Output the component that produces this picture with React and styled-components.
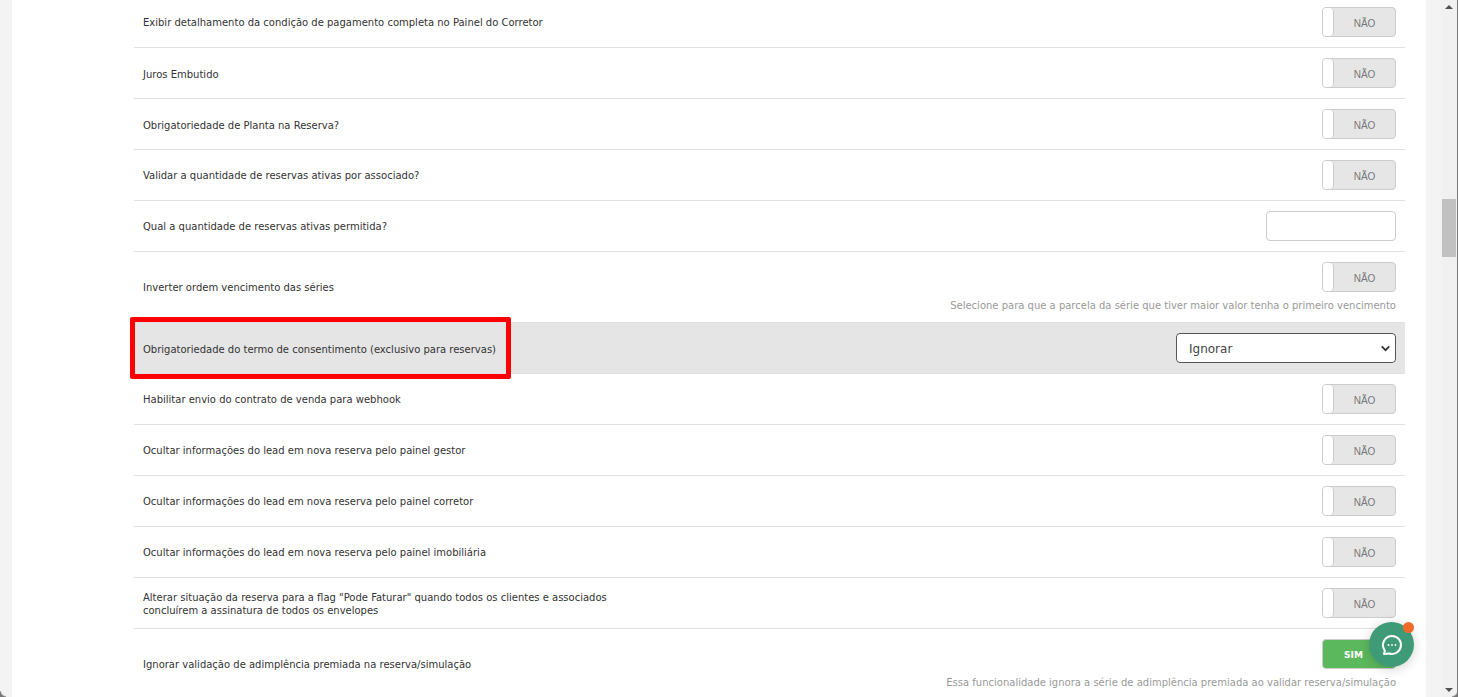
import React from 'react';
import styled, { createGlobalStyle } from 'styled-components';

const GlobalStyle = createGlobalStyle`
  html, body {
    margin: 0;
    height: 100%;
    overflow: hidden;
    background: #f3f3f3;
  }
  * {
    box-sizing: border-box;
  }
`;

const Window = styled.div`
  width: 1458px;
  height: 697px;
  display: flex;
  overflow: hidden;
  position: relative;
  font-family: 'DejaVu Sans', Verdana, sans-serif;
`;

const Page = styled.div`
  flex: 1;
  padding: 0 15px 0 12px;
  background: #f3f3f3;
  overflow: hidden;
`;

const Panel = styled.div`
  height: 100%;
  background: #fff;
  padding: 0 21px 0 122px;
  overflow: hidden;
`;

const List = styled.div`
  margin-top: -3px;
`;

const Row = styled.div`
  display: flex;
  align-items: center;
  justify-content: space-between;
  height: ${p => p.$height || 51}px;
  padding: 0 9px;
  border-bottom: 1px solid #e1e1e1;
  background: ${p => (p.$active ? '#e5e5e5' : 'transparent')};
`;

const Label = styled.div`
  position: relative;
  width: 480px;
  padding-top: ${p => (p.$nudge ? 2 : 0)}px;
  font-size: 10px;
  line-height: 13px;
  color: #333;
`;

const Highlight = styled.div`
  position: absolute;
  left: -13px;
  top: -24px;
  width: 381px;
  height: 62px;
  border: 5px solid #ff0000;
  border-radius: 2px;
`;

const Control = styled.div`
  display: flex;
  flex-direction: column;
  align-items: flex-end;
  gap: 7px;
`;

const Hint = styled.div`
  font-size: 10px;
  line-height: 13px;
  color: #999;
`;

const Toggle = styled.div`
  display: flex;
  width: 74px;
  height: 30px;
  border: 1px solid #ccc;
  border-radius: 4px;
  overflow: hidden;
  background: ${p => (p.$on ? '#5cb85c' : '#e6e6e6')};
`;

const Knob = styled.div`
  width: 11px;
  background: #fff;
  border-right: 1px solid #ccc;
  border-radius: 0 4px 4px 0;
`;

const ToggleText = styled.span`
  flex: 1;
  padding-top: 2px;
  text-align: center;
  font-family: 'Liberation Sans', Arial, sans-serif;
  font-size: 10px;
  line-height: 28px;
  color: #777;
`;

const OnText = styled.span`
  flex: 1;
  padding: 1px 11px 0 0;
  text-align: center;
  font-size: 9px;
  font-weight: 700;
  line-height: 28px;
  color: #fff;
`;

const TextInput = styled.div`
  width: 130px;
  height: 30px;
  background: #fff;
  border: 1px solid #ccc;
  border-radius: 4px;
`;

const SelectBox = styled.div`
  display: flex;
  align-items: center;
  justify-content: space-between;
  width: 220px;
  height: 30px;
  padding: 1px 4px 0 12px;
  background: #fff;
  border: 1px solid #555;
  border-radius: 4px;
  font-size: 12px;
  color: #444;
`;

const Scrollbar = styled.div`
  width: 17px;
  display: flex;
  flex-direction: column;
  align-items: center;
  justify-content: space-between;
  background: #f1f1f1;
  border-right: 1px solid #777;
`;

const ArrowUp = styled.div`
  margin-top: 5px;
  border-left: 4px solid transparent;
  border-right: 4px solid transparent;
  border-bottom: 4px solid #505050;
`;

const ArrowDown = styled.div`
  margin-bottom: 5px;
  border-left: 4px solid transparent;
  border-right: 4px solid transparent;
  border-top: 4px solid #505050;
`;

const Thumb = styled.div`
  position: absolute;
  top: 199px;
  right: 2px;
  width: 14px;
  height: 58px;
  background: #c1c1c1;
`;

const Corner = styled.div`
  position: absolute;
  bottom: 0;
  ${p => (p.$right ? 'right: 0' : 'left: 0')};
  width: 6px;
  height: 6px;
  background: radial-gradient(
    circle at ${p => (p.$right ? '0 0' : '100% 0')},
    transparent 4.5px,
    #777 6px
  );
`;

const ChatButton = styled.div`
  position: absolute;
  left: 1369px;
  top: 622px;
  width: 45px;
  height: 45px;
  display: flex;
  align-items: center;
  justify-content: center;
  border-radius: 50%;
  background: #3f9a78;
  box-shadow: 0 2px 12px rgba(0, 0, 0, 0.18);
`;

const ChatDot = styled.div`
  position: absolute;
  top: 0;
  right: 0;
  width: 11px;
  height: 11px;
  border-radius: 50%;
  background: #f26a2a;
`;

const rows = [
  { label: 'Exibir detalhamento da condição de pagamento completa no Painel do Corretor' },
  { label: 'Juros Embutido', nudge: true },
  { label: 'Obrigatoriedade de Planta na Reserva?', nudge: true },
  { label: 'Validar a quantidade de reservas ativas por associado?' },
  { label: 'Qual a quantidade de reservas ativas permitida?', kind: 'input' },
  {
    label: 'Inverter ordem vencimento das séries',
    hint: 'Selecione para que a parcela da série que tiver maior valor tenha o primeiro vencimento',
    height: 71,
  },
  {
    label: 'Obrigatoriedade do termo de consentimento (exclusivo para reservas)',
    kind: 'select',
    nudge: true,
  },
  { label: 'Habilitar envio do contrato de venda para webhook' },
  { label: 'Ocultar informações do lead em nova reserva pelo painel gestor' },
  { label: 'Ocultar informações do lead em nova reserva pelo painel corretor' },
  { label: 'Ocultar informações do lead em nova reserva pelo painel imobiliária' },
  {
    label: 'Alterar situação da reserva para a flag "Pode Faturar" quando todos os clientes e associados concluírem a assinatura de todos os envelopes',
    nudge: true,
  },
  {
    label: 'Ignorar validação de adimplência premiada na reserva/simulação',
    hint: 'Essa funcionalidade ignora a série de adimplência premiada ao validar reserva/simulação',
    height: 71,
    on: true,
  },
];

const Chevron = () => (
  <svg width="11" height="11" viewBox="0 0 16 16">
    <path d="M2.5 5 L8 10.5 L13.5 5" fill="none" stroke="#333" strokeWidth="2.6" />
  </svg>
);

const ChatIcon = () => (
  <svg width="24" height="24" viewBox="0 0 24 24" fill="none">
    <path
      d="M12 3a9 9 0 1 1-3 17.5L4 21l.9-3.5A9 9 0 0 1 12 3z"
      stroke="#fff"
      strokeWidth="2"
      strokeLinejoin="round"
    />
    <circle cx="8.5" cy="12" r="0.9" fill="#fff" />
    <circle cx="12" cy="12" r="0.9" fill="#fff" />
    <circle cx="15.5" cy="12" r="0.9" fill="#fff" />
  </svg>
);

const renderControl = row => {
  if (row.kind === 'input') return <TextInput />;
  if (row.kind === 'select') {
    return (
      <SelectBox>
        Ignorar
        <Chevron />
      </SelectBox>
    );
  }
  return (
    <Control>
      {row.on ? (
        <Toggle $on>
          <OnText>SIM</OnText>
        </Toggle>
      ) : (
        <Toggle>
          <Knob />
          <ToggleText>NÃO</ToggleText>
        </Toggle>
      )}
      {row.hint && <Hint>{row.hint}</Hint>}
    </Control>
  );
};

const App = () => (
  <Window>
    <GlobalStyle />
    <Page>
      <Panel>
        <List>
          {rows.map(row => (
            <Row key={row.label} $height={row.height} $active={row.kind === 'select'}>
              <Label $nudge={row.nudge}>
                {row.label}
                {row.kind === 'select' && <Highlight />}
              </Label>
              {renderControl(row)}
            </Row>
          ))}
        </List>
      </Panel>
    </Page>
    <Scrollbar>
      <ArrowUp />
      <ArrowDown />
    </Scrollbar>
    <Thumb />
    <Corner />
    <Corner $right />
    <ChatButton>
      <ChatIcon />
      <ChatDot />
    </ChatButton>
  </Window>
);

export default App;
